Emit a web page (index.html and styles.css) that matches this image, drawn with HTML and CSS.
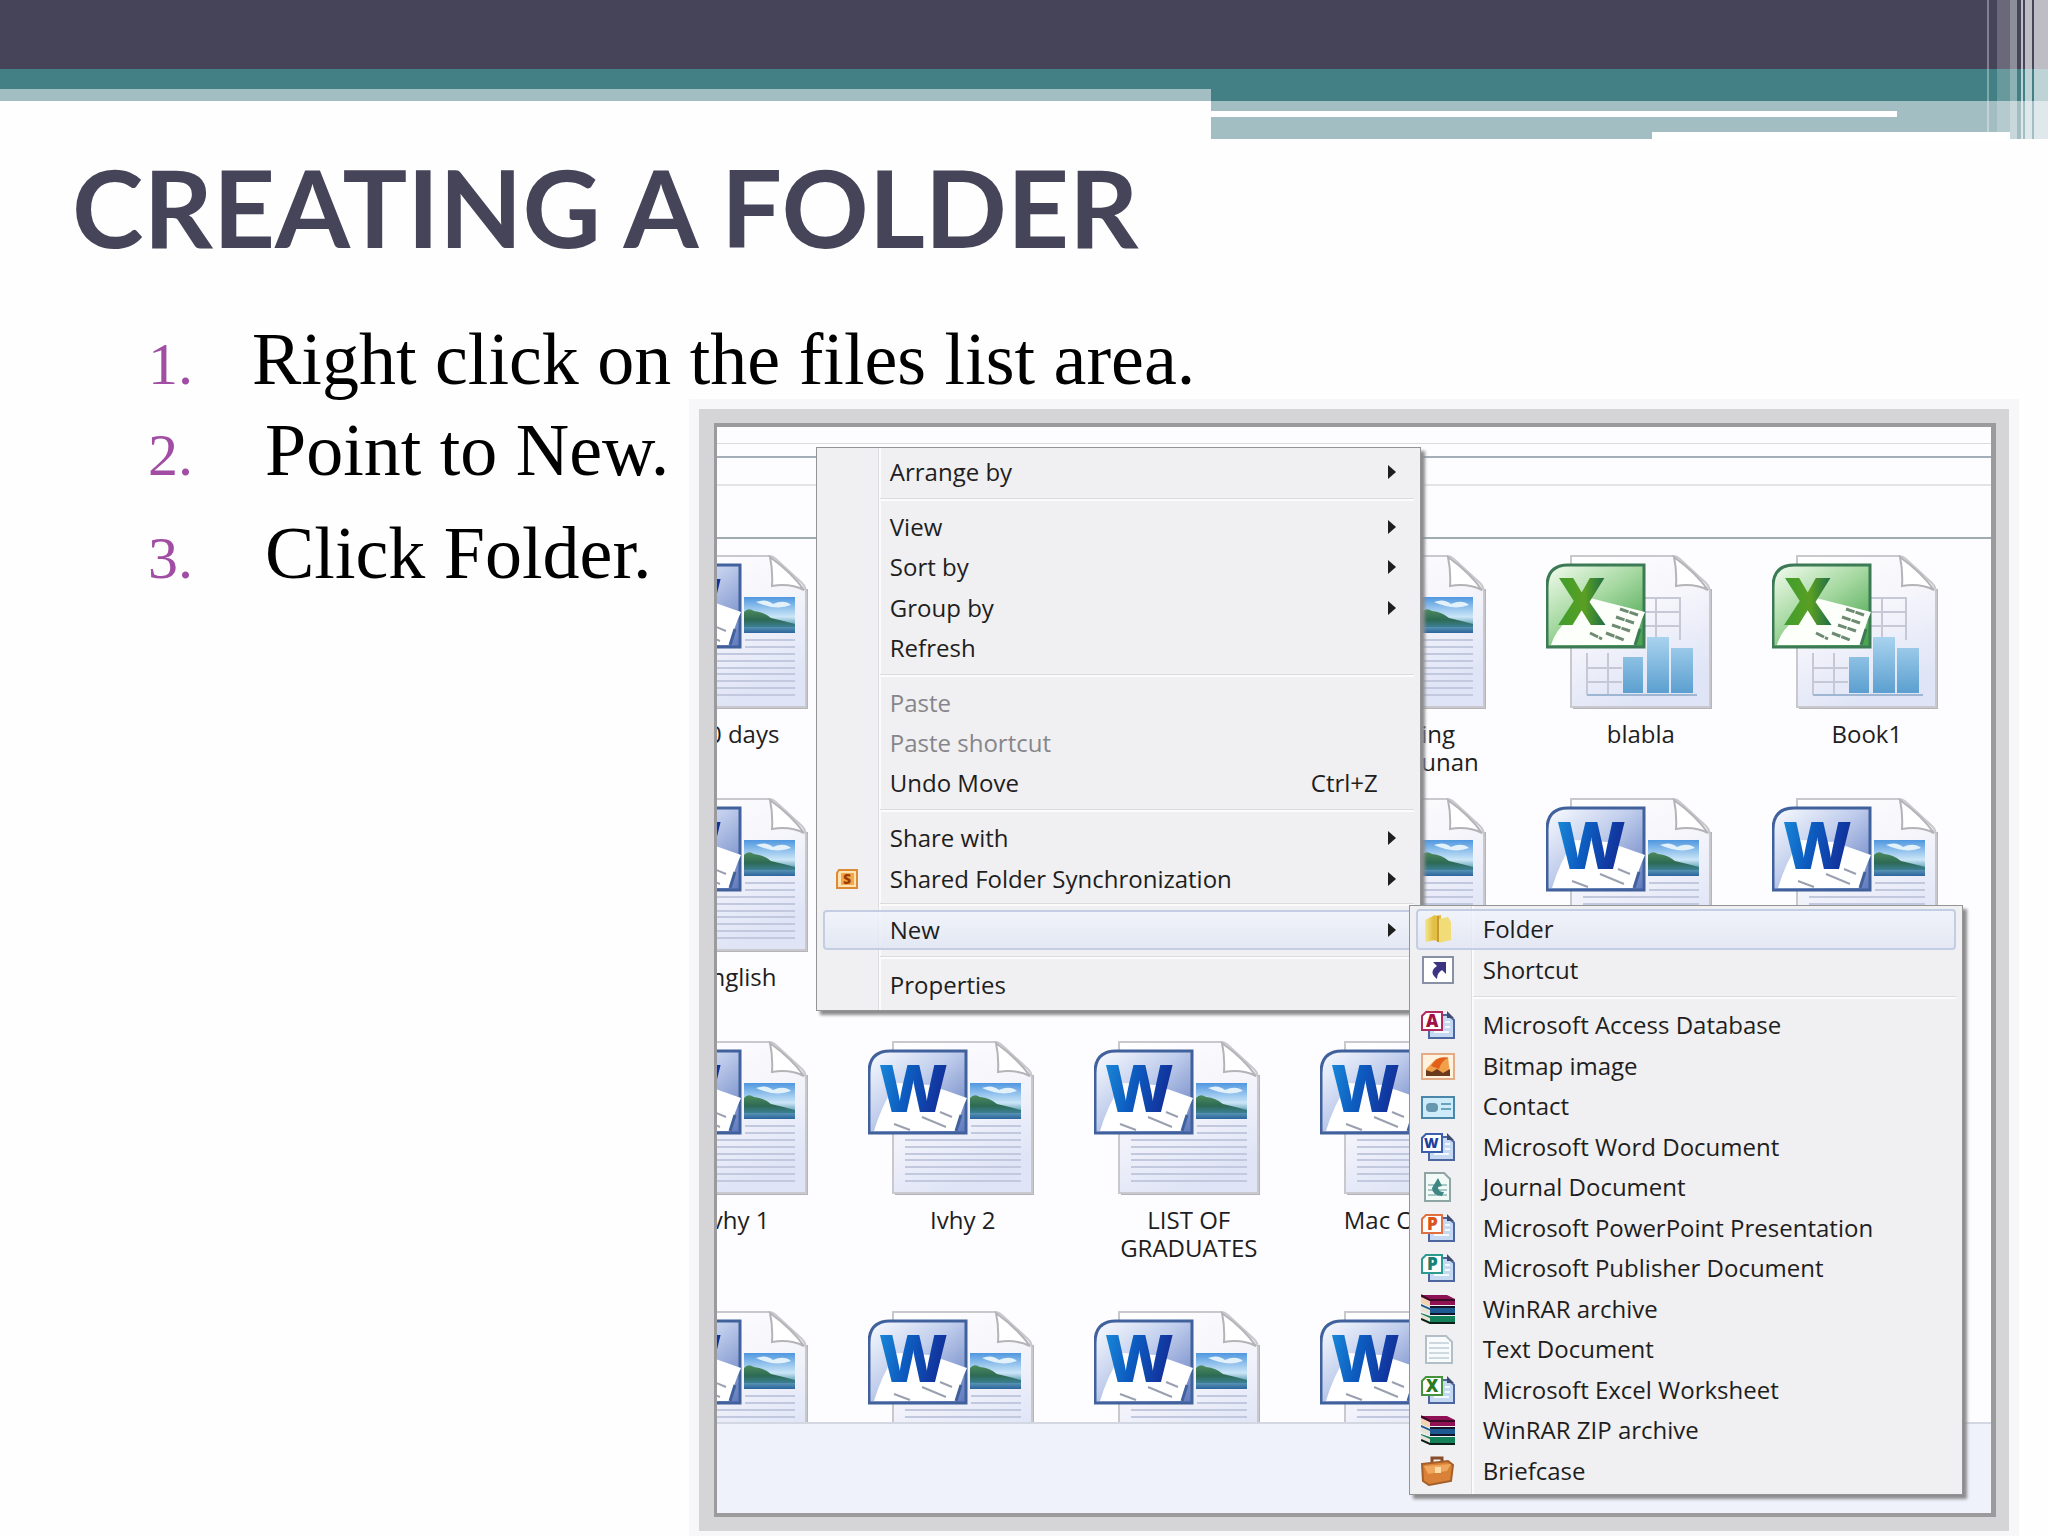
FILE: index.html
```
<!DOCTYPE html>
<html lang="en">
<head>
  <meta charset="UTF-8">
  <meta name="viewport" content="width=device-width, initial-scale=1.0">
  <title>Creating a Folder</title>
  <link rel="stylesheet" href="styles.css">
</head>
<body>
  <!-- Shared icon shapes -->
  <svg class="defs" aria-hidden="true">
    <defs>
      <linearGradient id="page" x1="0" y1="0" x2="0.4" y2="1">
        <stop offset="0" stop-color="#ffffff"/>
        <stop offset="0.5" stop-color="#f5f5fb"/>
        <stop offset="1" stop-color="#dfe4f6"/>
      </linearGradient>
      <linearGradient id="wordBadge" x1="0" y1="0" x2="1" y2="1">
        <stop offset="0" stop-color="#fafcff"/>
        <stop offset="0.45" stop-color="#c0cdec"/>
        <stop offset="1" stop-color="#5d78bd"/>
      </linearGradient>
      <linearGradient id="wordLetter" x1="0" y1="0" x2="1" y2="0.3">
        <stop offset="0" stop-color="#1b8fdc"/>
        <stop offset="0.5" stop-color="#0d5cc0"/>
        <stop offset="1" stop-color="#12309a"/>
      </linearGradient>
      <linearGradient id="excelBadge" x1="0" y1="0" x2="0.8" y2="1">
        <stop offset="0" stop-color="#f4fcf0"/>
        <stop offset="0.5" stop-color="#a5d8a0"/>
        <stop offset="1" stop-color="#4aa551"/>
      </linearGradient>
      <linearGradient id="excelLetter" x1="0" y1="0" x2="1" y2="0">
        <stop offset="0" stop-color="#3f9d2f"/>
        <stop offset="0.55" stop-color="#5a9f22"/>
        <stop offset="1" stop-color="#1c6b4a"/>
      </linearGradient>
      <linearGradient id="sky" x1="0" y1="0" x2="0" y2="1">
        <stop offset="0" stop-color="#4f97e0"/>
        <stop offset="0.55" stop-color="#cbe6f7"/>
        <stop offset="0.75" stop-color="#6fa9bd"/>
        <stop offset="1" stop-color="#2b659e"/>
      </linearGradient>
      <linearGradient id="hill" x1="0" y1="0" x2="0" y2="1">
        <stop offset="0" stop-color="#4c8a5c"/>
        <stop offset="0.6" stop-color="#2d6a55"/>
        <stop offset="1" stop-color="#3d7f95"/>
      </linearGradient>
      <linearGradient id="bar" x1="0" y1="0" x2="0" y2="1">
        <stop offset="0" stop-color="#a9d3ee"/>
        <stop offset="1" stop-color="#5b9fd0"/>
      </linearGradient>
      <linearGradient id="gold" x1="0" y1="0" x2="1" y2="0">
        <stop offset="0" stop-color="#f7e98c"/>
        <stop offset="1" stop-color="#dcb63a"/>
      </linearGradient>

      <symbol id="sheet" viewBox="0 0 190 154">
        <path d="M27 153H165V34" fill="none" stroke="#b5b5b9" stroke-width="2"/>
        <path d="M25 1H127Q131 1 135 5L160 28Q164 32 164 38V152H25Z" fill="url(#page)" stroke="#c9c9cd" stroke-width="2"/>
        <path d="M128 2Q131 16 130 31Q148 28 162 35Q150 18 128 2Z" fill="#fff" stroke="#b4b4b8" stroke-width="2"/>
      </symbol>

      <symbol id="word" viewBox="0 0 190 154">
        <use href="#sheet" width="190" height="154"/>
        <rect x="102" y="42" width="51" height="36" fill="url(#sky)"/>
        <path d="M114 47Q124 43 131 49Q142 44 149 50Q134 56 114 47Z" fill="#e3f1fb"/>
        <path d="M102 57Q106 52 112 56Q122 57 129 63Q142 66 153 69V72H102Z" fill="url(#hill)"/>
        <path d="M103 85H153M103 92H153M37 99H153M37 106H153M37 113H153M37 119H153M37 126H153M37 133H153M37 140H153" stroke="#c2c8dd" stroke-width="2"/>
        <path d="M22 10H98V92H1V32Q1 10 22 10Z" fill="url(#wordBadge)" stroke="#40619c" stroke-width="3"/>
        <path d="M6 90Q13 66 28 42L62 44L99 57Q92 72 88 90Z" fill="#fff"/>
        <path d="M54 76L78 86M72 71L84 76M26 83L42 89" stroke="#9aa0b0" stroke-width="2"/>
        <path d="M93 74L88 90" stroke="#40619c" stroke-width="3"/>
        <text x="11" y="71" class="badge-letter" fill="url(#wordLetter)">W</text>
      </symbol>

      <symbol id="excel" viewBox="0 0 190 154">
        <use href="#sheet" width="190" height="154"/>
        <path d="M99 43H134V85M99 57H134M99 71H134M110 43V85M41 113H76M41 127H76M41 98V140M62 98V140" fill="none" stroke="#c6c8d6" stroke-width="2"/>
        <path d="M77 102H97V138H77ZM101 82H123V138H101ZM125 93H147V138H125Z" fill="url(#bar)"/>
        <path d="M41 140H70M70 140H151" stroke="#9fb6d2" stroke-width="2"/>
        <path d="M22 10H98V92H1V32Q1 10 22 10Z" fill="url(#excelBadge)" stroke="#3b7a55" stroke-width="3"/>
        <path d="M5 90Q10 74 22 66L44 43L99 57Q92 72 90 90Z" fill="#fdfffa"/>
        <path d="M74 54L92 60M70 62L88 68M66 70L84 76M60 78L78 85M44 78L56 84" stroke="#6d8a72" stroke-width="3" stroke-dasharray="9 1"/>
        <path d="M94 74L89 90" stroke="#3b7a55" stroke-width="3"/>
        <text x="12" y="70" class="badge-letter" fill="url(#excelLetter)">X</text>
      </symbol>

      <!-- Small office document, badge takes the current colour -->
      <symbol id="office" viewBox="0 0 34 30">
        <path d="M8 5H27L33 10V28H8Z" fill="#c5d9f3" stroke="#4d66a0" stroke-width="2"/>
        <path d="M13 22H28M24 12H29M24 17H29" stroke="#f4f8ff" stroke-width="2"/>
        <path d="M26 1L33 8H26Z" fill="#3e4c70"/>
        <path d="M5 2H21V20H1V6Z" fill="#fff" stroke="currentColor" stroke-width="2"/>
      </symbol>

      <symbol id="books" viewBox="0 0 34 30">
        <path d="M0 1H26L34 5V11H9L0 7Z" fill="#8e1154"/>
        <path d="M0 3L9 7V13L0 9Z" fill="#f0d5b0"/>
        <path d="M0 1L9 6H34" fill="none" stroke="#3b0a25" stroke-width="2"/>
        <path d="M0 10L9 14H34V20H9L0 16Z" fill="#1d5a92"/>
        <path d="M0 12L9 16V21L0 17Z" fill="#e8e3d5"/>
        <path d="M9 13H34M9 20H34" stroke="#10162a" stroke-width="2"/>
        <path d="M0 19L9 22H34V29H9L0 25Z" fill="#13805a"/>
        <path d="M0 20L9 24V29L0 25Z" fill="#e8e3d5"/>
        <path d="M0 25L9 29H34" fill="none" stroke="#0c2019" stroke-width="2"/>
      </symbol>

      <symbol id="arrow" viewBox="0 0 8 14">
        <path d="M0 0L8 7L0 14Z" fill="#1e1e1e"/>
      </symbol>
    </defs>
  </svg>

  <div class="banner">
    <div class="band-dark"></div>
    <div class="band-teal"></div>
    <div class="band-left"></div>
    <div class="band-right">
      <div class="band-line"></div>
      <div class="band-notch"></div>
    </div>
    <div class="stripes">
      <i class="s1"></i><i class="s2"></i><i class="s3"></i><i class="s4"></i><i class="s5"></i><i class="s6"></i>
    </div>
  </div>

  <main class="slide">
    <h1>CREATING A FOLDER</h1>

    <div class="content">
      <ol class="steps">
        <li><span class="num">1.</span><span>Right click on the files list area.</span></li>
        <li class="indent"><span class="num">2.</span><span>Point to New.</span></li>
        <li class="indent last"><span class="num">3.</span><span>Click Folder.</span></li>
      </ol>

      <div class="picture">
        <div class="window">
          <div class="bar-top"></div>
          <div class="bar-address"></div>
          <div class="bar-menu"></div>
          <div class="bar-tools"></div>
          <div class="files">
            <figure class="file c1 r1"><svg><use href="#word"/></svg><figcaption>30 days</figcaption></figure>
            <figure class="file c4 r1"><svg><use href="#word"/></svg><figcaption>Writing Palantunan</figcaption></figure>
            <figure class="file c5 r1"><svg><use href="#excel"/></svg><figcaption>blabla</figcaption></figure>
            <figure class="file c6 r1"><svg><use href="#excel"/></svg><figcaption>Book1</figcaption></figure>

            <figure class="file c1 r2"><svg><use href="#word"/></svg><figcaption>English</figcaption></figure>
            <figure class="file c4 r2"><svg><use href="#word"/></svg></figure>
            <figure class="file c5 r2"><svg><use href="#word"/></svg></figure>
            <figure class="file c6 r2"><svg><use href="#word"/></svg></figure>

            <figure class="file c1 r3"><svg><use href="#word"/></svg><figcaption>Ivhy 1</figcaption></figure>
            <figure class="file c2 r3"><svg><use href="#word"/></svg><figcaption>Ivhy 2</figcaption></figure>
            <figure class="file c3 r3"><svg><use href="#word"/></svg><figcaption>LIST OF GRADUATES</figcaption></figure>
            <figure class="file c4 r3"><svg><use href="#word"/></svg><figcaption>Mac Outlook</figcaption></figure>

            <figure class="file c1 r4"><svg><use href="#word"/></svg></figure>
            <figure class="file c2 r4"><svg><use href="#word"/></svg></figure>
            <figure class="file c3 r4"><svg><use href="#word"/></svg></figure>
            <figure class="file c4 r4"><svg><use href="#word"/></svg></figure>
          </div>
          <div class="details"></div>
        </div>

        <ul class="menu context-menu">
          <li><button type="button"><span class="icon"></span>Arrange by<svg class="arrow"><use href="#arrow"/></svg></button></li>
          <li class="sep"></li>
          <li><button type="button"><span class="icon"></span>View<svg class="arrow"><use href="#arrow"/></svg></button></li>
          <li><button type="button"><span class="icon"></span>Sort by<svg class="arrow"><use href="#arrow"/></svg></button></li>
          <li><button type="button"><span class="icon"></span>Group by<svg class="arrow"><use href="#arrow"/></svg></button></li>
          <li><button type="button"><span class="icon"></span>Refresh</button></li>
          <li class="sep"></li>
          <li><button type="button" disabled><span class="icon"></span>Paste</button></li>
          <li><button type="button" disabled><span class="icon"></span>Paste shortcut</button></li>
          <li><button type="button"><span class="icon"></span>Undo Move<span class="key">Ctrl+Z</span></button></li>
          <li class="sep"></li>
          <li><button type="button"><span class="icon"></span>Share with<svg class="arrow"><use href="#arrow"/></svg></button></li>
          <li><button type="button"><span class="icon"><svg viewBox="0 0 34 30"><path d="M11 6H29V24H9V9Z" fill="#fde3b5" stroke="#dd8a35" stroke-width="2"/><rect x="13" y="9" width="13" height="12" fill="#f7a645"/><text x="15" y="20" class="small-letter s" fill="#9c3b08">S</text></svg></span>Shared Folder Synchronization<svg class="arrow"><use href="#arrow"/></svg></button></li>
          <li class="sep tight"></li>
          <li><button type="button" class="active"><span class="icon"></span>New<svg class="arrow"><use href="#arrow"/></svg></button></li>
          <li class="sep"></li>
          <li><button type="button"><span class="icon"></span>Properties</button></li>
        </ul>

        <ul class="menu new-menu">
          <li><button type="button" class="active"><span class="icon"><svg viewBox="0 0 34 30"><path d="M4 6L14 1V26L4 28Z" fill="url(#gold)"/><path d="M12 2L20 1V28L12 26Z" fill="#e3bf45"/><path d="M18 5L27 3L30 8V26L18 29Z" fill="#f1dc78"/><path d="M17 2V28" stroke="#c69a2c" stroke-width="2"/></svg></span>Folder</button></li>
          <li><button type="button"><span class="icon"><svg viewBox="0 0 34 30"><rect x="2" y="2" width="30" height="26" fill="#fff" stroke="#8790a5" stroke-width="2"/><path d="M12 7H25V19L21 15Q16 18 16 24Q7 17 16 11Z" fill="#3a3483"/></svg></span>Shortcut</button></li>
          <li class="sep"></li>
          <li><button type="button"><span class="icon access"><svg viewBox="0 0 34 30"><use href="#office"/><text x="5" y="17" class="small-letter" fill="#a31045">A</text></svg></span>Microsoft Access Database</button></li>
          <li><button type="button"><span class="icon"><svg viewBox="0 0 34 30"><rect x="1" y="3" width="32" height="25" fill="#fff3df" stroke="#e3ab86" stroke-width="2"/><path d="M5 24V18L15 8L27 6L29 24Z" fill="#f0a04b"/><path d="M10 15Q16 4 27 7Q20 10 18 18Z" fill="#e2601c"/><path d="M5 19L11 21L16 18L22 22L29 18V25H5Z" fill="#6b3a1d"/></svg></span>Bitmap image</button></li>
          <li><button type="button"><span class="icon"><svg viewBox="0 0 34 30"><rect x="1" y="6" width="32" height="21" fill="#cdebf8" stroke="#4b87a8" stroke-width="2"/><rect x="5" y="12" width="12" height="9" rx="4" fill="#6797ae"/><path d="M20 13H30M20 18H30" stroke="#6aa3bf" stroke-width="2"/></svg></span>Contact</button></li>
          <li><button type="button"><span class="icon word"><svg viewBox="0 0 34 30"><use href="#office"/><text x="3" y="16" class="small-letter w" fill="#1e3f9e">W</text></svg></span>Microsoft Word Document</button></li>
          <li><button type="button"><span class="icon"><svg viewBox="0 0 34 30"><path d="M4 1H23L29 7V29H4Z" fill="#f2faf8" stroke="#8fa5a5" stroke-width="2"/><path d="M7 13H26M7 18H26M7 23H26" stroke="#a5c9c8" stroke-width="2"/><path d="M17 6L11 16Q11 23 21 24L23 20Q17 20 17 15L21 14Z" fill="#3d8681"/></svg></span>Journal Document</button></li>
          <li><button type="button"><span class="icon powerpoint"><svg viewBox="0 0 34 30"><use href="#office"/><text x="6" y="17" class="small-letter" fill="#d9541e">P</text></svg></span>Microsoft PowerPoint Presentation</button></li>
          <li><button type="button"><span class="icon publisher"><svg viewBox="0 0 34 30"><use href="#office"/><text x="6" y="17" class="small-letter" fill="#168276">P</text></svg></span>Microsoft Publisher Document</button></li>
          <li><button type="button"><span class="icon"><svg viewBox="0 0 34 30"><use href="#books"/></svg></span>WinRAR archive</button></li>
          <li><button type="button"><span class="icon"><svg viewBox="0 0 34 30"><path d="M5 2H25L31 8V29H5Z" fill="#f8fbfc" stroke="#b3bec6" stroke-width="2"/><path d="M8 9H28M8 14H28M8 19H28M8 24H28" stroke="#cdd9df" stroke-width="2"/></svg></span>Text Document</button></li>
          <li><button type="button"><span class="icon excel"><svg viewBox="0 0 34 30"><use href="#office"/><text x="5" y="17" class="small-letter" fill="#2b7a22">X</text></svg></span>Microsoft Excel Worksheet</button></li>
          <li><button type="button"><span class="icon"><svg viewBox="0 0 34 30"><use href="#books"/></svg></span>WinRAR ZIP archive</button></li>
          <li><button type="button"><span class="icon"><svg viewBox="0 0 34 30"><path d="M11 6V2H21V6" fill="none" stroke="#8a4d2a" stroke-width="3"/><path d="M1 8L27 5L32 9L30 25L8 29L2 25Z" fill="#d98136" stroke="#a45f2b" stroke-width="2"/><path d="M3 10L30 8L26 15L7 18Z" fill="#f0a75b"/><path d="M14 11H20V17H14Z" fill="#fbdca8"/></svg></span>Briefcase</button></li>
        </ul>
      </div>
    </div>
  </main>
</body>
</html>
```
FILE: styles.css
```
:root {
  --dark: #464459;
  --teal: #438086;
  --light-teal: #a3bec2;
  --number: #a04da3;
  --menu-bg: #f0eff1;
}

* {
  box-sizing: border-box;
  margin: 0;
  padding: 0;
}

body {
  background: #fefefe;
  font-family: 'Liberation Serif', serif;
  color: #000;
  min-height: 100vh;
  overflow-x: hidden;
}

.defs {
  position: absolute;
  width: 0;
  height: 0;
}

/* Banner */
.banner {
  position: relative;
  height: 139px;
}

.band-dark {
  height: 69px;
  background: var(--dark);
}

.band-teal {
  height: 20px;
  background: var(--teal);
}

.band-left {
  height: 12px;
  background: var(--light-teal);
}

.band-right {
  position: absolute;
  top: 89px;
  left: 1211px;
  right: 0;
  height: 50px;
  border-top: 12px solid var(--teal);
  background: var(--light-teal);
}

.band-line {
  height: 6px;
  margin: 10px 151px 0 0;
  background: #fff;
}

.band-notch {
  height: 7px;
  margin: 15px 38px 0 441px;
  background: #fff;
}

.stripes {
  position: absolute;
  top: 0;
  right: 0;
  width: 61px;
  height: 139px;
  display: flex;
}

.stripes i {
  background: rgba(255, 255, 255, 0.65);
}

.stripes .s1 { width: 2px; opacity: 0.5; }
.stripes .s2 { width: 13px; margin-left: 8px; opacity: 0.3; }
.stripes .s3 { width: 7px; opacity: 0.6; }
.stripes .s4 { width: 2px; margin-left: 4px; }
.stripes .s5 { width: 7px; margin-left: 2px; }
.stripes .s6 { flex: 1; margin-left: 2px; }

/* Slide text */
h1 {
  padding: 0 72px;
  font-family: 'Lato', sans-serif;
  font-size: 108px;
  font-weight: 700;
  line-height: 134px;
  color: var(--dark);
}

.content {
  display: grid;
  grid-template-columns: 35% minmax(0, 1fr) 57px;
  padding: 48px 0 23px;
}

.steps {
  list-style: none;
  padding-left: 148px;
  font-size: 74px;
  line-height: 76px;
  white-space: nowrap;
}

.steps li {
  display: flex;
  align-items: baseline;
  margin-bottom: 10px;
}

.steps .last {
  margin-top: 22px;
}

.steps .num {
  flex: none;
  width: 104px;
  font-size: 60px;
  color: var(--number);
}

.steps .indent .num {
  width: 117px;
}

/* Explorer window */
.picture {
  position: relative;
  margin-top: 106px;
  height: 1086px;
  font-family: 'Open Sans', sans-serif;
  font-size: 24px;
  color: #1e1e1e;
  box-shadow: 1px 0 0 4px #9b9b9d, 0 0 0 18px #d5d4d7, 0 0 0 28px #f7f6f9;
}

.window {
  display: flex;
  flex-direction: column;
  height: 100%;
  overflow: hidden;
  background: #fdfcfe;
}

.bar-top {
  height: 17px;
  border-bottom: 1px solid #dcdcdf;
}

.bar-address {
  height: 14px;
  border-bottom: 2px solid #a3aeb8;
}

.bar-menu {
  height: 28px;
  border-bottom: 2px solid #e3e4e3;
}

.bar-tools {
  height: 53px;
  border-bottom: 2px solid #9eabb1;
}

.files {
  display: grid;
  grid-template-columns: repeat(6, 226px);
  grid-template-rows: 243px 243px 270px 154px;
  height: 883px;
  margin-left: -93px;
  padding-top: 16px;
  overflow: hidden;
}

.c1 { grid-column: 1; }
.c2 { grid-column: 2; }
.c3 { grid-column: 3; }
.c4 { grid-column: 4; }
.c5 { grid-column: 5; }
.c6 { grid-column: 6; }
.r1 { grid-row: 1; }
.r2 { grid-row: 2; }
.r3 { grid-row: 3; }
.r4 { grid-row: 4; }

.file {
  text-align: center;
}

.file svg {
  display: block;
  width: 190px;
  height: 154px;
  margin: 0 auto 11px;
}

.file figcaption {
  width: 160px;
  margin: 0 auto;
  line-height: 28px;
}

.badge-letter {
  font-family: 'Open Sans', sans-serif;
  font-size: 66px;
  font-weight: 800;
}

.details {
  flex: 1;
  border-top: 2px solid #d3d7e2;
  background: #f0f2fb;
}

/* Menus */
.menu {
  position: absolute;
  display: flex;
  flex-direction: column;
  padding: 3px 6px;
  list-style: none;
  border: 1px solid #939496;
  background: linear-gradient(90deg, transparent 61px, #dddde1 61px, #dddde1 62px, #fbfbfc 62px, #fbfbfc 64px, transparent 64px) var(--menu-bg);
  box-shadow: 4px 4px 3px #8c8c8e;
}

.context-menu {
  top: 20px;
  left: 99px;
  width: 605px;
  height: 564px;
  padding-top: 4px;
  padding-bottom: 5px;
}

.new-menu {
  top: 478px;
  left: 692px;
  width: 554px;
  height: 590px;
}

.menu li {
  flex: 1;
}

.menu .sep {
  flex: none;
  height: 3px;
  margin: 6px 0 6px 57px;
  border-top: 1px solid #dbdbde;
  background: #fbfbfc;
}

.menu .tight {
  margin-top: 4px;
  margin-bottom: 4px;
}

.menu button {
  display: flex;
  align-items: center;
  width: 100%;
  height: 100%;
  padding-right: 16px;
  border: 2px solid transparent;
  border-radius: 4px;
  background: none;
  font: inherit;
  line-height: 28px;
  color: inherit;
  text-align: left;
}

.menu button:disabled {
  color: #86868a;
}

.menu .active {
  border-color: #c3cde3;
  background: linear-gradient(rgba(240, 244, 252, 0.8), rgba(225, 230, 244, 0.8));
}

.icon {
  display: flex;
  justify-content: center;
  width: 40px;
  margin-right: 25px;
}

.icon svg {
  width: 34px;
  height: 30px;
}

.small-letter {
  font-family: 'Open Sans', sans-serif;
  font-size: 17px;
  font-weight: 800;
}

.small-letter.w,
.small-letter.s {
  font-size: 14px;
}

.access { color: #b52a5c; }
.word { color: #3a5fae; }
.powerpoint { color: #e0703f; }
.publisher { color: #2b9a8f; }
.excel { color: #43943a; }

.arrow {
  width: 8px;
  height: 14px;
  margin-left: auto;
}

.key {
  margin-left: auto;
  padding-right: 18px;
}
```
